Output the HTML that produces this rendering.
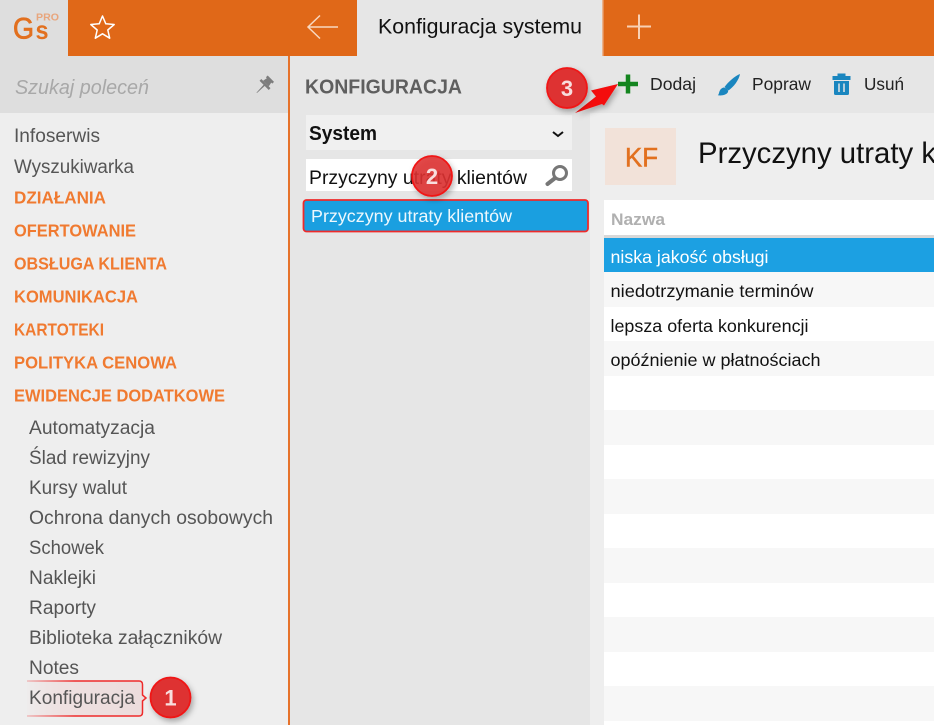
<!DOCTYPE html>
<html lang="pl"><head><meta charset="utf-8"><title>Konfiguracja systemu</title>
<style>
html,body{margin:0;padding:0;background:#eee;width:934px;height:725px;overflow:hidden}
svg{display:block;font-family:"Liberation Sans",sans-serif}
.m{font-size:19px;fill:#555}
.h{font-size:17.5px;font-weight:bold;fill:#f07a30}
.t{font-size:17.5px;fill:#111}
.b{font-size:22px;font-weight:bold;fill:#f8dede;text-anchor:middle}
</style></head><body>
<svg width="934" height="725" viewBox="0 0 934 725" xmlns="http://www.w3.org/2000/svg">
<defs>
<filter id="s" x="-40%" y="-40%" width="180%" height="180%"><feDropShadow dx="2" dy="3" stdDeviation="3" flood-color="#000" flood-opacity=".3"/></filter>
<linearGradient id="cf" x1="0" x2="1" y1="0" y2="0"><stop offset="0" stop-color="#eedcdc" stop-opacity=".1"/><stop offset=".3" stop-color="#eee0e0"/><stop offset="1" stop-color="#ecdcdc"/></linearGradient>
<linearGradient id="cs" gradientUnits="userSpaceOnUse" x1="27" x2="75" y1="0" y2="0"><stop offset="0" stop-color="#ee2a2a" stop-opacity=".25"/><stop offset="1" stop-color="#ee2a2a"/></linearGradient>
</defs>
<rect width="934" height="725" fill="#eee"/>
<!-- top bar -->
<rect width="934" height="56" fill="#e06818"/>
<rect width="68" height="56" fill="#dedede"/>
<text x="13" y="38.500" font-size="30" fill="#e2701f" stroke="#e2701f" stroke-width=".8" textLength="21" lengthAdjust="spacingAndGlyphs">G</text>
<text x="35.500" y="39" font-size="26" font-weight="bold" fill="#e2701f" textLength="13" lengthAdjust="spacingAndGlyphs">s</text>
<text x="36" y="20.500" font-size="10.500" font-weight="bold" fill="#e8a57c" textLength="23" lengthAdjust="spacingAndGlyphs">PRO</text>
<path d="M102.500 16l3.300 7.800 8.400.7-6.400 5.500 1.900 8.200-7.200-4.400-7.200 4.400 1.900-8.200-6.400-5.500 8.400-.7z" fill="none" stroke="#fff" stroke-width="1.500" stroke-linejoin="round"/>
<path d="M338 27H308M320 15.500L308 27l12 11.500" fill="none" stroke="#f8d8c0" stroke-width="1.500"/>
<rect x="357" width="245" height="56" fill="#e6e6e6"/>
<rect x="602" width="1.500" height="56" fill="#eab48f"/>
<text x="378" y="33.500" font-size="21" fill="#111" textLength="204" lengthAdjust="spacingAndGlyphs">Konfiguracja systemu</text>
<path d="M627 26.500h24M639 14.500v24.500" stroke="#f8d0b4" stroke-width="2" fill="none"/>
<!-- sidebar -->
<rect y="56" width="288" height="57" fill="#dedede"/>
<text x="15" y="94" font-size="20.500" font-style="italic" fill="#a8a8a8" textLength="134" lengthAdjust="spacingAndGlyphs">Szukaj poleceń</text>
<g transform="translate(264.500 85) rotate(45)" fill="#7d7d7d"><rect x="-4.500" y="-9" width="9" height="2.500"/><path d="M-3-7h6l1 5h-8z"/><rect x="-6.500" y="-2" width="13" height="2.500"/><path d="M-.8 0h1.600L.3 11h-.6z"/></g>
<rect x="288" y="56" width="2" height="669" fill="#e6722a"/>
<text class="m" x="14" y="142" textLength="86" lengthAdjust="spacingAndGlyphs">Infoserwis</text>
<text class="m" x="14" y="173" textLength="120" lengthAdjust="spacingAndGlyphs">Wyszukiwarka</text>
<text class="h" x="14" y="203.500" textLength="92" lengthAdjust="spacingAndGlyphs">DZIAŁANIA</text>
<text class="h" x="14" y="236.500" textLength="122" lengthAdjust="spacingAndGlyphs">OFERTOWANIE</text>
<text class="h" x="14" y="269.500" textLength="153" lengthAdjust="spacingAndGlyphs">OBSŁUGA KLIENTA</text>
<text class="h" x="14" y="302.500" textLength="124" lengthAdjust="spacingAndGlyphs">KOMUNIKACJA</text>
<text class="h" x="14" y="335.500" textLength="90" lengthAdjust="spacingAndGlyphs">KARTOTEKI</text>
<text class="h" x="14" y="368.500" textLength="163" lengthAdjust="spacingAndGlyphs">POLITYKA CENOWA</text>
<text class="h" x="14" y="401.500" textLength="211" lengthAdjust="spacingAndGlyphs">EWIDENCJE DODATKOWE</text>
<text class="m" x="29" y="434" textLength="126" lengthAdjust="spacingAndGlyphs">Automatyzacja</text>
<text class="m" x="29" y="464" textLength="121" lengthAdjust="spacingAndGlyphs">Ślad rewizyjny</text>
<text class="m" x="29" y="494" textLength="98" lengthAdjust="spacingAndGlyphs">Kursy walut</text>
<text class="m" x="29" y="524" textLength="244" lengthAdjust="spacingAndGlyphs">Ochrona danych osobowych</text>
<text class="m" x="29" y="554" textLength="75" lengthAdjust="spacingAndGlyphs">Schowek</text>
<text class="m" x="29" y="584" textLength="67" lengthAdjust="spacingAndGlyphs">Naklejki</text>
<text class="m" x="29" y="614" textLength="67" lengthAdjust="spacingAndGlyphs">Raporty</text>
<text class="m" x="29" y="644" textLength="193" lengthAdjust="spacingAndGlyphs">Biblioteka załączników</text>
<text class="m" x="29" y="674" textLength="50" lengthAdjust="spacingAndGlyphs">Notes</text>
<!-- callout 1 -->
<path d="M27 681H139q3.500 0 3.500 3.500V695l3.500 3-3.500 3v11.500q0 3.500-3.500 3.500H27z" fill="url(#cf)"/>
<path d="M27 681H139q3.500 0 3.500 3.500V695l3.500 3-3.500 3v11.500q0 3.500-3.500 3.500H27" fill="none" stroke="url(#cs)" stroke-width="1.500"/>
<text class="m" x="29" y="704" textLength="106" lengthAdjust="spacingAndGlyphs">Konfiguracja</text>
<!-- middle panel -->
<rect x="290" y="56" width="300" height="669" fill="#e6e6e6"/>
<rect x="590" y="56" width="344" height="57" fill="#e6e6e6"/>
<text x="305" y="93.500" font-size="20" font-weight="bold" fill="#5f5f5f" textLength="157" lengthAdjust="spacingAndGlyphs">KONFIGURACJA</text>
<rect x="306" y="115" width="266" height="35" fill="#f0f0f0"/>
<text x="309" y="140" font-size="20" font-weight="bold" fill="#111" textLength="68" lengthAdjust="spacingAndGlyphs">System</text>
<path d="M553 132l5 4 5-4" fill="none" stroke="#111" stroke-width="2"/>
<rect x="306" y="159" width="266" height="32" fill="#fff"/>
<text x="309" y="184" font-size="19" fill="#111" textLength="218" lengthAdjust="spacingAndGlyphs">Przyczyny utraty klientów</text>
<circle cx="560" cy="173" r="6.500" fill="none" stroke="#777" stroke-width="3"/>
<path d="M554.500 178.500l-7 5.500" stroke="#777" stroke-width="4" stroke-linecap="round"/>
<rect x="303.500" y="200" width="284.500" height="31.500" rx="3" fill="#1a9fe0" stroke="#ee2a2a" stroke-width="1.800"/>
<text x="311" y="222" font-size="17.500" fill="#eef8fd" textLength="201" lengthAdjust="spacingAndGlyphs">Przyczyny utraty klientów</text>
<!-- toolbar -->
<path d="M628 74.500v19M618 84h20" stroke="#14851f" stroke-width="4.500"/>
<text x="650" y="90" font-size="17.500" fill="#222" textLength="46" lengthAdjust="spacingAndGlyphs">Dodaj</text>
<path d="M740 74c-5 2-12 8-15.500 13l4 3.500c5-3.500 10.500-10.500 11.500-16.500z" fill="#1a86bf"/>
<path d="M723.500 87.500c-3.500 1-4 4-4.500 5.500-.300 1-.6 1.800-1.200 2.300 4 .6 8.700-.3 10.200-3.300.6-1.500-.8-4-4.500-4.500z" fill="#1a86bf"/>
<text x="752" y="90" font-size="17.500" fill="#222" textLength="59" lengthAdjust="spacingAndGlyphs">Popraw</text>
<path d="M833 76.500h17v3h-17zM838 76.500v-2.500h7v2.500" fill="#1a86bf" stroke="#1a86bf" stroke-width="1"/>
<path d="M834 81h15v12.500q0 1.500-1.500 1.500h-12q-1.500 0-1.500-1.500z" fill="#1a86bf"/>
<path d="M839 83.500v8.500M844 83.500v8.500" stroke="#e6e6e6" stroke-width="1.500"/>
<text x="864" y="90" font-size="17.500" fill="#222" textLength="40" lengthAdjust="spacingAndGlyphs">Usuń</text>
<!-- content header -->
<rect x="605" y="128" width="71" height="57" fill="#f2e2d9"/>
<text x="625" y="166.500" font-size="27" fill="#e2701f" stroke="#e2701f" stroke-width=".5" textLength="33" lengthAdjust="spacingAndGlyphs">KF</text>
<text x="698" y="163" font-size="29.500" fill="#111" textLength="238" lengthAdjust="spacingAndGlyphs">Przyczyny utraty k</text>
<!-- table -->
<rect x="604" y="200" width="330" height="525" fill="#fff"/>
<rect x="604" y="235" width="330" height="3" fill="#d8d8d8"/>
<text x="611" y="225" font-size="17" font-weight="bold" fill="#b0b0b0" textLength="54" lengthAdjust="spacingAndGlyphs">Nazwa</text>
<rect x="604" y="238" width="330" height="34" fill="#1ca0e2"/>
<rect x="604" y="272" width="330" height="35" fill="#f7f7f7"/>
<rect x="604" y="341" width="330" height="35" fill="#f7f7f7"/>
<rect x="604" y="410" width="330" height="35" fill="#f7f7f7"/>
<rect x="604" y="479" width="330" height="35" fill="#f7f7f7"/>
<rect x="604" y="548" width="330" height="35" fill="#f7f7f7"/>
<rect x="604" y="617" width="330" height="35" fill="#f7f7f7"/>
<rect x="604" y="686" width="330" height="35" fill="#f7f7f7"/>
<text class="t" x="610.500" y="263" style="fill:#fff" textLength="158" lengthAdjust="spacingAndGlyphs">niska jakość obsługi</text>
<text class="t" x="610.500" y="297" textLength="203" lengthAdjust="spacingAndGlyphs">niedotrzymanie terminów</text>
<text class="t" x="610.500" y="332" textLength="198" lengthAdjust="spacingAndGlyphs">lepsza oferta konkurencji</text>
<text class="t" x="610.500" y="366" textLength="210" lengthAdjust="spacingAndGlyphs">opóźnienie w płatnościach</text>
<!-- badges -->
<g filter="url(#s)"><path d="M618 84L591 90.500l5 6L575 113l27-9 2 1.500z" fill="#f40a0a"/></g>
<g filter="url(#s)"><circle cx="567" cy="88" r="20" fill="#de3232" stroke="#f01414" stroke-width="1.800"/></g>
<text class="b" x="567" y="96">3</text>
<g filter="url(#s)"><circle cx="432" cy="176" r="20" fill="#de3232" fill-opacity=".88" stroke="#f01414" stroke-width="1.800"/></g>
<text class="b" x="432" y="184">2</text>
<g filter="url(#s)"><circle cx="170.500" cy="697.500" r="20" fill="#de3232" stroke="#f01414" stroke-width="1.800"/></g>
<text class="b" x="170.500" y="705.500">1</text>
</svg>
</body></html>
